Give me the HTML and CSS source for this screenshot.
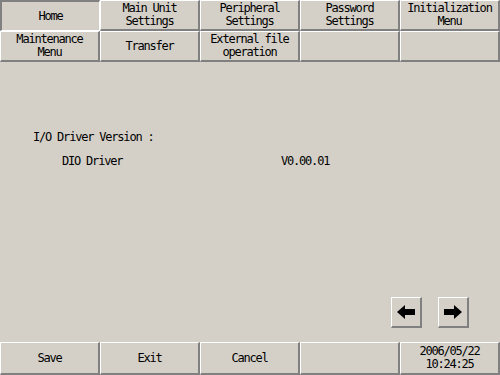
FILE: index.html
```html
<!DOCTYPE html>
<html lang="en">
<head>
    <meta charset="UTF-8">
    <meta name="viewport" content="width=device-width, initial-scale=1.0">
    <title>I/O Driver Version</title>
    <link rel="stylesheet" href="styles.css">
</head>
<body>

    <div class="tabs">
        <div class="btn pressed">Home</div>
        <div class="btn">Main Unit<br>Settings</div>
        <div class="btn">Peripheral<br>Settings</div>
        <div class="btn">Password<br>Settings</div>
        <div class="btn">Initialization<br>Menu</div>
        <div class="btn">Maintenance<br>Menu</div>
        <div class="btn">Transfer</div>
        <div class="btn">External file<br>operation</div>
        <div class="btn"></div>
        <div class="btn"></div>
    </div>

    <div class="main">
        <div class="info">
            <div class="title">I/O Driver Version :</div>
            <div class="row">
                <span class="name">DIO Driver</span>
                <span class="ver">V0.00.01</span>
            </div>
        </div>
        <div class="arrows">
            <div class="btn arrow">
                <svg width="18" height="14" viewBox="0 0 18 14"><path d="M0 7 L8 0 L8 4 L18 4 L18 10 L8 10 L8 14 Z" fill="#000"/></svg>
            </div>
            <div class="btn arrow">
                <svg width="18" height="14" viewBox="0 0 18 14"><path d="M18 7 L10 0 L10 4 L0 4 L0 10 L10 10 L10 14 Z" fill="#000"/></svg>
            </div>
        </div>
    </div>

    <div class="footer">
        <div class="btn">Save</div>
        <div class="btn">Exit</div>
        <div class="btn">Cancel</div>
        <div class="btn"></div>
        <div class="btn clock">2006/05/22<br>10:24:25</div>
    </div>

</body>
</html>
```

FILE: styles.css
```css
body {
    margin: 0;
    width: 500px;
    height: 375px;
    display: flex;
    flex-direction: column;
    background-color: #d4d0c8;
    font-family: "DejaVu Sans Mono", monospace;
    font-size: 12px;
    letter-spacing: -1.2px;
    color: #000;
    overflow: hidden;
}
.btn {
    box-sizing: border-box;
    display: flex;
    align-items: center;
    justify-content: center;
    text-align: center;
    line-height: 13px;
    background-color: #d4d0c8;
    border-top: 1px solid #ffffff;
    border-left: 1px solid #ffffff;
    border-right: 2px solid #808080;
    border-bottom: 2px solid #808080;
}
.btn.pressed {
    border-top: 2px solid #808080;
    border-left: 2px solid #808080;
    border-right: 1px solid #ffffff;
    border-bottom: 1px solid #ffffff;
}
.tabs {
    display: grid;
    grid-template-columns: repeat(5, 100px);
    grid-template-rows: 31px 31px;
}
.main {
    flex: 1;
    display: flex;
    flex-direction: column;
    justify-content: space-between;
    padding: 68px 31px 14px 33px;
}
.title {
    line-height: 14px;
}
.row {
    display: flex;
    margin-top: 10px;
    padding-left: 29px;
    line-height: 14px;
}
.name {
    width: 219px;
}
.arrows {
    display: flex;
    justify-content: flex-end;
    gap: 16px;
}
.arrow {
    width: 31px;
    height: 31px;
}
.footer {
    display: grid;
    grid-template-columns: repeat(5, 100px);
    height: 33px;
}
.clock {
    line-height: 13px;
}
```
